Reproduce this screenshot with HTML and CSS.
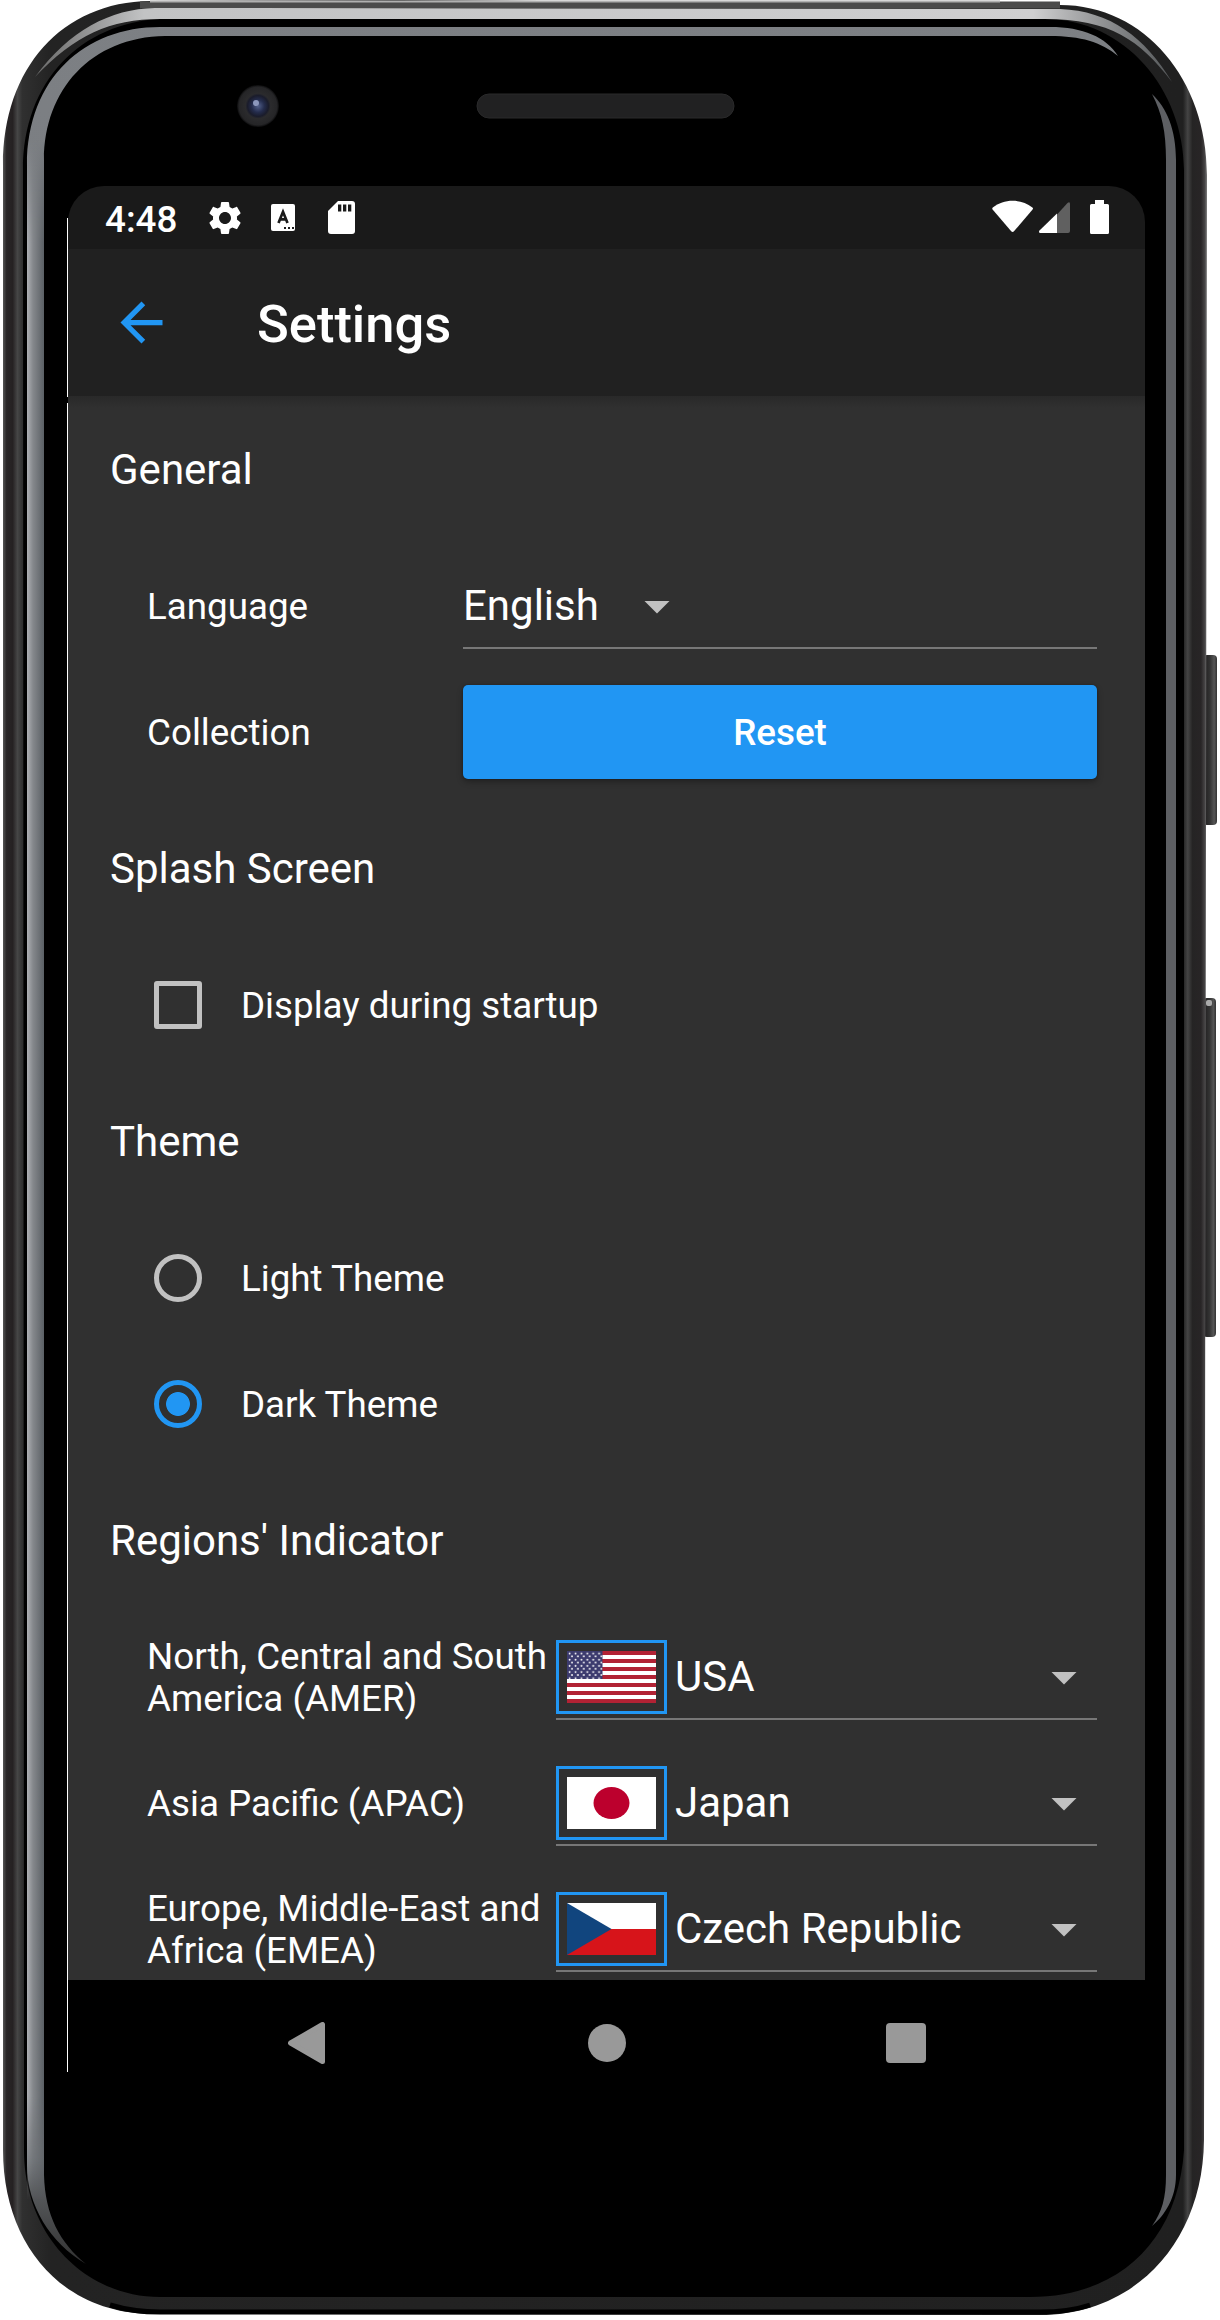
FILE: index.html
```html
<!DOCTYPE html>
<html lang="en">
<head>
<meta charset="utf-8">
<title>Settings</title>
<link rel="stylesheet" href="styles.css">
</head>
<body>
<div class="phone">
  <svg class="frame" width="1220" height="2320" viewBox="0 0 1220 2320" aria-hidden="true">
    <defs>
      <linearGradient id="rim" x1="0" x2="1" y1="0" y2="0">
        <stop offset="0" stop-color="#555"/><stop offset=".003" stop-color="#292627"/><stop offset=".008" stop-color="#252122"/>
        <stop offset=".012" stop-color="#464646"/><stop offset=".016" stop-color="#303030"/><stop offset=".04" stop-color="#232323"/><stop offset=".98" stop-color="#202020"/>
        <stop offset=".984" stop-color="#444"/><stop offset=".988" stop-color="#252424"/><stop offset=".995" stop-color="#282526"/>
        <stop offset=".998" stop-color="#454344"/><stop offset="1" stop-color="#777"/>
      </linearGradient>
      <linearGradient id="shine" gradientUnits="userSpaceOnUse" x1="0" x2="0" y1="0" y2="2320">
        <stop offset="0" stop-color="#7d8084"/><stop offset=".93" stop-color="#686c70"/><stop offset=".975" stop-color="#333"/>
      </linearGradient>
      <linearGradient id="glint" gradientUnits="userSpaceOnUse" x1="27" x2="44" y1="0" y2="0">
        <stop offset="0" stop-color="#aeb0b4"/><stop offset=".35" stop-color="#85888c"/><stop offset="1" stop-color="#5b6065"/>
      </linearGradient>
      <linearGradient id="fade" gradientUnits="userSpaceOnUse" x1="0" x2="0" y1="140" y2="2200">
        <stop offset="0" stop-color="#000"/><stop offset=".05" stop-color="#fff"/><stop offset=".95" stop-color="#fff"/><stop offset="1" stop-color="#000"/>
      </linearGradient>
      <mask id="glintFade" maskUnits="userSpaceOnUse" x="20" y="140" width="30" height="2060"><path d="M20 140h30v2060H20z" fill="url(#fade)"/></mask>
      <linearGradient id="arc" gradientUnits="userSpaceOnUse" x1="30" x2="1170" y1="0" y2="0">
        <stop offset="0" stop-color="#666"/><stop offset=".1" stop-color="#c2c3c4"/><stop offset=".88" stop-color="#cfcfd0"/><stop offset="1" stop-color="#55585a"/>
      </linearGradient>
      <linearGradient id="key" x1="0" x2="1" y1="0" y2="0">
        <stop offset="0" stop-color="#1c1a1b"/><stop offset=".5" stop-color="#333"/><stop offset=".8" stop-color="#555"/><stop offset="1" stop-color="#333"/>
      </linearGradient>
      <radialGradient id="lens">
        <stop offset="0" stop-color="#53618c"/><stop offset=".3" stop-color="#242c4c"/><stop offset=".5" stop-color="#1a1c2b"/><stop offset=".6" stop-color="#2b2b2d"/><stop offset=".9" stop-color="#252527"/><stop offset="1" stop-color="#0b0b0c"/>
      </radialGradient>
    </defs>
    <rect x="1203" y="655" width="14" height="170" rx="4" fill="url(#key)"/>
    <rect x="1203" y="998" width="13" height="339" rx="4" fill="url(#key)"/>
    <rect x="1206" y="1000" width="6" height="6" rx="2" fill="#aaa"/>
    <path d="M3 165C3 68 62 2 150 1L400 0 1060 5C1145 5 1207 80 1207 175L1204 2140C1203 2242 1135 2315 1040 2315L150 2314C60 2312 3 2243 3 2150Z" fill="url(#rim)"/>
    <path d="M110 2305C130 2311 145 2312 160 2312H1040C1060 2312 1075 2310 1090 2305" fill="none" stroke="#000" stroke-width="5"/>
    <path d="M140 5H1060" stroke="#4b4b4b" stroke-width="7"/>
    <path d="M150 1.5H1000" stroke="#b0b0b0" stroke-width="2"/>
    <path d="M23 170C23 80 82 23 160 19H1045C1125 19 1184 90 1184 170V2150C1178 2240 1120 2297 1030 2297H160C85 2297 24 2235 24 2150Z" fill="#000"/>
    <path d="M35 77C70 30 110 9 155 8L1060 9C1110 11 1145 37 1172 82C1140 40 1110 19 1045 19H160C110 19 75 35 35 77Z" fill="url(#arc)"/>
    <path d="M27 165C27 78 85 27 160 27H1050C1083 27 1106 37 1118 56C1101 42 1081 36 1050 36H165C91 37 44 90 44 160V2175C45 2215 60 2243 86 2264C50 2243 27 2205 27 2165Z" fill="url(#shine)"/>
    <path d="M27 140H44V2200H27Z" fill="url(#glint)" mask="url(#glintFade)"/>
    <path d="M1152 94C1167 108 1176 130 1176 160V2175C1176 2198 1165 2215 1152 2226C1162 2212 1166 2198 1166 2175V160C1166 132 1162 113 1152 94Z" fill="#5d5f63"/>
    <circle cx="258" cy="106" r="21" fill="url(#lens)"/>
    <circle cx="256" cy="103" r="3" fill="#8c98bd"/>
    <rect x="477" y="94" width="257" height="24" rx="12" fill="#212122" stroke="#2a2a2b"/>
    <path d="M67.5 218V397M67.5 403V2072" stroke="#fff"/>
  </svg>

  <main class="screen">
    <header class="status">
      <span class="clock">4:48</span>
      <svg class="st-gear" width="40" height="40" viewBox="0 0 24 24"><path fill="#fff" d="M19.14 12.94c.04-.3.06-.61.06-.94 0-.32-.02-.64-.07-.94l2.03-1.58c.18-.14.23-.41.12-.61l-1.92-3.32c-.12-.22-.37-.29-.59-.22l-2.39.96c-.5-.38-1.03-.7-1.62-.94l-.36-2.54c-.04-.24-.24-.41-.48-.41h-3.84c-.24 0-.43.17-.47.41l-.36 2.54c-.59.24-1.13.57-1.62.94l-2.39-.96c-.22-.08-.47 0-.59.22L2.74 8.87c-.12.21-.08.47.12.61l2.03 1.58c-.05.3-.09.63-.09.94s.02.64.07.94l-2.03 1.58c-.18.14-.23.41-.12.61l1.92 3.32c.12.22.37.29.59.22l2.39-.96c.5.38 1.03.7 1.62.94l.36 2.54c.05.24.24.41.48.41h3.84c.24 0 .44-.17.47-.41l.36-2.54c.59-.24 1.13-.56 1.62-.94l2.39.96c.22.08.47 0 .59-.22l1.92-3.32c.12-.22.07-.47-.12-.61l-2.01-1.58zM12 15.6c-1.98 0-3.6-1.62-3.6-3.6s1.62-3.6 3.6-3.6 3.6 1.62 3.6 3.6-1.62 3.6-3.6 3.6z"/></svg>
      <svg class="st-lang" width="24" height="27" viewBox="0 0 24 27"><rect width="24" height="27" rx="2" fill="#fff"/><path d="M7.5 19 12 7.8 16.500 19M9 15.300H15" fill="none" stroke="#1a1a1a" stroke-width="2.700"/><path d="M13 23h2v2h-2zM17 23h2v2h-2zM21 23h2v2h-2z" fill="#1a1a1a"/></svg>
      <svg class="st-card" width="27" height="33" viewBox="0 0 27 33"><path fill="#fff" d="M10 0H24a3 3 0 0 1 3 3V30a3 3 0 0 1-3 3H3a3 3 0 0 1-3-3V10Z"/><path d="M10 3.500h3.300v7H10zM15 3.500h3.300v7H15zM20 3.500h3.300v7H20z" fill="#1a1a1a"/></svg>
      <svg class="st-radio" width="118" height="35" viewBox="0 0 118 35">
        <path fill="#fff" d="M.8 7.500C12 -1.500 29 -1.500 40.400 7.500Q41.500 8.500 40.600 9.600L22.200 31Q20.600 32.800 19 31L.6 9.600Q-.2 8.500.8 7.500Z"/>
        <path fill="#606060" d="M65 14.500 75.500 3Q78 1 78 4V31Q78 33 76 33H65Z"/>
        <path fill="#fff" d="M65 13.500V33H48.500Q46 32.500 47.500 30.500Z"/>
        <path fill="#fff" d="M103 0h9v4h3.500Q117 4 117 5.500V32.500Q117 34 115.500 34H99.500Q98 34 98 32.500V5.500Q98 4 99.500 4H103Z"/>
      </svg>
    </header>

    <header class="appbar">
      <svg width="63" height="63" viewBox="0 0 24 24"><path fill="#2196f3" d="M20 11H7.830l5.590-5.590L12 4l-8 8 8 8 1.410-1.410L7.830 13H20v-2z"/></svg>
      <h1>Settings</h1>
    </header>

    <div class="content">
      <h2>General</h2>
      <div class="row general">
        <span class="label">Language</span>
        <div class="select narrow"><span class="value">English</span><i class="caret"></i></div>
      </div>
      <div class="row general">
        <span class="label">Collection</span>
        <button class="reset">Reset</button>
      </div>

      <h2>Splash Screen</h2>
      <div class="row option"><i class="box"></i><span class="label">Display during startup</span></div>

      <h2>Theme</h2>
      <div class="row option"><i class="radio"></i><span class="label">Light Theme</span></div>
      <div class="row option"><i class="radio on"></i><span class="label">Dark Theme</span></div>

      <h2>Regions' Indicator</h2>
      <div class="row region">
        <span class="label">North, Central and South<br>America (AMER)</span>
        <div class="select"><span class="flag"><svg width="89" height="52" viewBox="0 0 89 52" preserveAspectRatio="none">
          <defs><pattern id="stars" width="5.900" height="6.200" patternUnits="userSpaceOnUse"><circle cx="2.600" cy="2.500" r=".95" fill="#fff"/><circle cx="5" cy="5.400" r=".95" fill="#fff"/></pattern></defs>
          <path d="M0 0h89v52H0z" fill="#fff"/>
          <path d="M0 2h89M0 10h89M0 18h89M0 26h89M0 34h89M0 42h89M0 50h89" stroke="#b22234" stroke-width="4"/>
          <path d="M0 0h35.500v28H0z" fill="#3c3b6e"/><path d="M0 0h35.500v28H0z" fill="url(#stars)"/></svg></span>
          <span class="value">USA</span><i class="caret"></i></div>
      </div>
      <div class="row region">
        <span class="label">Asia Pacific (APAC)</span>
        <div class="select"><span class="flag"><svg width="89" height="52" viewBox="0 0 89 52"><path d="M0 0h89v52H0z" fill="#fff"/><ellipse cx="44.500" cy="26" rx="18" ry="16" fill="#bc002d"/></svg></span>
          <span class="value">Japan</span><i class="caret"></i></div>
      </div>
      <div class="row region">
        <span class="label">Europe, Middle-East and<br>Africa (EMEA)</span>
        <div class="select"><span class="flag"><svg width="89" height="52" viewBox="0 0 89 52"><path d="M0 0h89v26H0z" fill="#fff"/><path d="M0 26h89v26H0z" fill="#d7141a"/><path d="M0 0 44.500 26 0 52Z" fill="#11457e"/></svg></span>
          <span class="value">Czech Republic</span><i class="caret"></i></div>
      </div>
    </div>

    <nav class="navbar">
      <svg width="37" height="42" viewBox="0 0 37 42"><path d="M34.500 2.500V39.500L2.500 21Z" fill="#999" stroke="#999" stroke-width="5" stroke-linejoin="round"/></svg>
      <i class="home"></i>
      <i class="recent"></i>
    </nav>
  </main>
</div>
</body>
</html>
```

FILE: styles.css
```css
* { box-sizing: border-box; }

body {
  margin: 0;
  background: #fff;
  color: #fff;
  font-family: Roboto, sans-serif;
}

.phone {
  display: grid;
  grid-template: 2320px / 1220px;
  overflow: hidden;
}

.frame, .screen { grid-area: 1 / 1; }

.frame { display: block; }

.screen {
  display: grid;
  grid-template-rows: 63px 147px 1584px 125px;
  width: 1077px;
  height: 1919px;
  margin: 186px 0 0 68px;
  border-radius: 36px;
  overflow: hidden;
  background: #000;
}

.status {
  display: flex;
  align-items: center;
  padding: 0 35px 0 37px;
  background: #1a1a1a;
}

.clock {
  width: 100px;
  font-size: 36.75px;
  font-weight: 500;
  line-height: 63px;
  padding-top: 3px;
}

.st-lang { margin-left: 26px; }
.st-card { margin-left: 33px; }
.st-radio { margin: 0 0 0 auto; }

.appbar {
  display: flex;
  align-items: center;
  gap: 84px;
  padding-left: 42px;
  background: #212121;
}

h1 {
  margin: 0;
  padding-top: 2px;
  font-size: 52.5px;
  font-weight: 500;
  line-height: 62px;
}

.content {
  overflow: hidden;
  background: linear-gradient(#292929, #303030 12px);
}

h2 {
  margin: 0;
  padding-left: 42px;
  font-size: 42px;
  font-weight: 400;
  line-height: 147px;
}

.row {
  display: grid;
  align-items: center;
  height: 126px;
  padding: 0 48px 0 79px;
}

.general { grid-template-columns: 316px 634px; }
.region { grid-template-columns: 409px 541px; }
.option { grid-template-columns: 48px 1fr; column-gap: 39px; padding-left: 86px; }

.label {
  padding-top: 2px;
  font-size: 36.75px;
  line-height: 42px;
  white-space: nowrap;
}

.select {
  display: flex;
  align-items: center;
  height: 86px;
  border-bottom: 2px solid #777;
  padding: 2px 20px 0 0;
}

.value {
  flex: 1;
  font-size: 42px;
  line-height: 50px;
}

.narrow .value { flex: none; width: 181px; }

.caret {
  width: 26px;
  height: 13px;
  margin-top: 2px;
  background: #c1c1c1;
  clip-path: polygon(0 0, 100% 0, 50% 100%);
}

.flag {
  display: flex;
  align-items: center;
  justify-content: center;
  width: 111px;
  height: 74px;
  margin-right: 8px;
  border: 3px solid #2196f3;
}

.reset {
  height: 94px;
  padding-top: 2px;
  border: 0;
  border-radius: 5px;
  background: #2196f3;
  color: #fff;
  font: 500 36.75px/42px Roboto, sans-serif;
  box-shadow: 0 3px 6px rgba(0, 0, 0, .3), 0 0 2px rgba(0, 0, 0, .3);
}

.box, .radio {
  width: 48px;
  height: 48px;
  border: 5.5px solid #c1c1c1;
  border-radius: 3px;
}

.radio { border-radius: 50%; }

.radio.on {
  border-color: #2196f3;
  background: radial-gradient(circle, #2196f3 11.5px, transparent 12.3px);
}

.navbar {
  display: flex;
  align-items: center;
  padding: 0 219px 0 220px;
  justify-content: space-between;
  background: #000;
}

.home, .recent { width: 38px; height: 38px; border-radius: 50%; background: #999; }
.home { margin-left: 3px; }
.recent { width: 40px; height: 40px; border-radius: 4px; }
```
